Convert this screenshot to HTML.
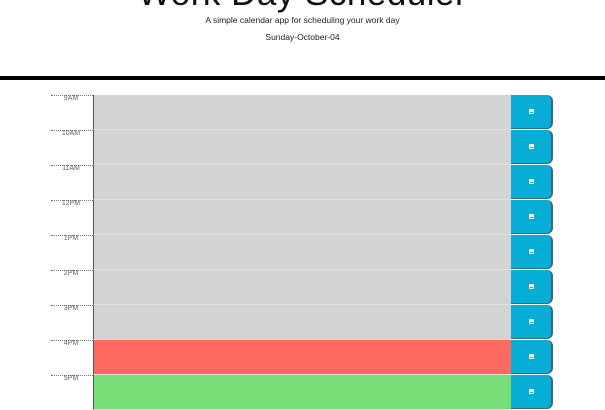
<!DOCTYPE html>
<html><head><style>
body{margin:0;background:#fff;font-family:"Liberation Sans",sans-serif;width:605px;height:408px;overflow:hidden;position:relative}
.t{position:absolute;left:0;width:605px;text-align:center;color:#222}
.bar{position:absolute;left:0;top:76px;width:605px;height:4px;background:#000}
.row{position:absolute;left:51px;height:35px;width:503px}
.lab{position:absolute;left:0;top:0;width:42px;height:35px;border-top:1px dotted #777;box-sizing:border-box;font-size:7px;color:#666;text-align:center;padding-right:2px;line-height:6px}
.ta{position:absolute;left:42px;top:0;width:418px;height:35px;border-left:1px solid #555;box-sizing:border-box;border-bottom:1px solid #ddd}
.btn{position:absolute;left:460px;top:0;width:42px;height:34px;background:#06aed5;border-radius:0 6px 6px 0;border-right:2px solid #3a6a78;border-bottom:1px solid #3a6a78;box-sizing:border-box}
.btn i{position:absolute;left:18px;top:14px;width:5px;height:5px;background:#fff;border-radius:1px}
.btn i:after{content:"";position:absolute;left:1px;top:3px;width:3px;height:1px;background:#06aed5}
</style></head><body>
<div class="t" style="top:-26px;font-size:35px;line-height:40px;color:#111;letter-spacing:0.5px">Work Day Scheduler</div>
<div class="t" style="top:15px;font-size:8.5px">A simple calendar app for scheduling your work day</div>
<div class="t" style="top:32px;font-size:8.5px">Sunday-October-04</div>
<div class="bar"></div>
<div class="row" style="top:95px"><div class="lab">9AM</div><div class="ta" style="background:#d3d3d3"></div><div class="btn"><i></i></div></div>
<div class="row" style="top:130px"><div class="lab">10AM</div><div class="ta" style="background:#d3d3d3"></div><div class="btn"><i></i></div></div>
<div class="row" style="top:165px"><div class="lab">11AM</div><div class="ta" style="background:#d3d3d3"></div><div class="btn"><i></i></div></div>
<div class="row" style="top:200px"><div class="lab">12PM</div><div class="ta" style="background:#d3d3d3"></div><div class="btn"><i></i></div></div>
<div class="row" style="top:235px"><div class="lab">1PM</div><div class="ta" style="background:#d3d3d3"></div><div class="btn"><i></i></div></div>
<div class="row" style="top:270px"><div class="lab">2PM</div><div class="ta" style="background:#d3d3d3"></div><div class="btn"><i></i></div></div>
<div class="row" style="top:305px"><div class="lab">3PM</div><div class="ta" style="background:#d3d3d3"></div><div class="btn"><i></i></div></div>
<div class="row" style="top:340px"><div class="lab">4PM</div><div class="ta" style="background:#ff6961"></div><div class="btn"><i></i></div></div>
<div class="row" style="top:375px"><div class="lab">5PM</div><div class="ta" style="background:#77dd77"></div><div class="btn"><i></i></div></div>
</body></html>
